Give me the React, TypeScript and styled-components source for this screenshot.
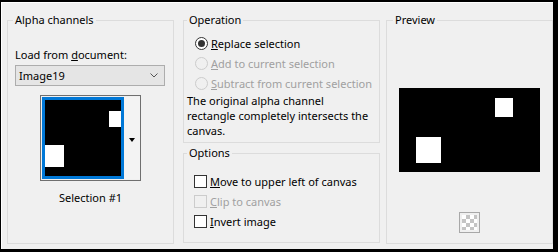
import styled, { createGlobalStyle } from 'styled-components';

const GlobalStyle = createGlobalStyle`
    html, body {
        margin: 0;
        padding: 0;
        background: #000;
    }
    body {
        width: 558px;
        height: 252px;
        overflow: hidden;
        font-family: "Noto Sans", "Segoe UI", sans-serif;
        font-size: 11px;
        color: #000;
    }
`

const Dialog = styled.div`
    box-sizing: border-box;
    margin: 2px 0 0 1px;
    width: 552px;
    height: 247px;
    background: #f0f0f0;
    border-top: 1px solid #fff;
    border-left: 1px solid #fff;
    padding: 9px 0 0 5px;
    display: flex;
    align-items: flex-start;
`
const Column = styled.div<{ $gap: number }>`
    display: flex;
    flex-direction: column;
    gap: 2px;
    margin-right: ${p => p.$gap}px;
`
const Group = styled.fieldset<{ $w: number; $h: number; $gap?: number }>`
    box-sizing: border-box;
    width: ${p => p.$w}px;
    height: ${p => p.$h}px;
    margin: 0 ${p => p.$gap ?? 0}px 0 0;
    padding: 0;
    min-width: 0;
    border: 1px solid #dcdcdc;
    display: flex;
    flex-direction: column;
`
const Legend = styled.legend<{ $indent: number }>`
    margin-left: ${p => p.$indent}px;
    padding: 0 2px;
    line-height: 16px;
`
const Key = styled.u`
    text-underline-offset: 1px;
`

/* alpha channels */
const AlphaBody = styled.div`
    display: flex;
    flex-direction: column;
    padding: 19px 7px 0;
`
const FieldLabel = styled.div`
    line-height: 16px;
`
const Combo = styled.div`
    box-sizing: border-box;
    margin-top: 2px;
    width: 150px;
    height: 21px;
    border: 1px solid #adadad;
    background: #e5e5e5;
    display: flex;
    align-items: center;
    justify-content: space-between;
    padding: 0 6px 0 3px;
`
const Thumb = styled.div`
    box-sizing: border-box;
    align-self: center;
    margin-top: 9px;
    width: 101px;
    height: 86px;
    border: 1px solid #6f6f6f;
    padding: 1px 0 1px 1px;
    display: flex;
    background: #f0f0f0;
`
const ThumbImage = styled.div`
    box-sizing: border-box;
    width: 82px;
    height: 82px;
    border: 3px solid #0078d7;
    background: #000;
    display: flex;
    svg { display: block; }
`
const ThumbArrow = styled.div`
    flex: 1;
    display: flex;
    align-items: center;
    justify-content: center;
    background: #f3f3f3;
    &::after {
        content: '';
        border-left: 3.5px solid transparent;
        border-right: 3.5px solid transparent;
        border-top: 4px solid #000;
        margin-top: 3px;
    }
`
const Caption = styled.div`
    margin-top: 9px;
    text-align: center;
    line-height: 16px;
`

/* operation + options */
const OptionList = styled.div<{ $top: number; $pad: number }>`
    display: flex;
    flex-direction: column;
    padding: ${p => p.$top}px 0 0 ${p => p.$pad}px;
`
const OptionRow = styled.label<{ $disabled?: boolean }>`
    height: 20px;
    display: flex;
    align-items: center;
    gap: 3px;
    color: ${p => (p.$disabled ? '#a0a0a0' : '#000')};
`
const Radio = styled.span<{ $on?: boolean; $disabled?: boolean }>`
    box-sizing: border-box;
    width: 13px;
    height: 13px;
    border-radius: 50%;
    border: 1px solid ${p => (p.$disabled ? '#cccccc' : '#333')};
    background: ${p => (p.$disabled ? '#f0f0f0' : '#fff')};
    display: flex;
    align-items: center;
    justify-content: center;
    &::after {
        content: '';
        width: 7px;
        height: 7px;
        border-radius: 50%;
        background: ${p => (p.$on ? '#333' : 'transparent')};
    }
`
const Check = styled.span<{ $disabled?: boolean }>`
    box-sizing: border-box;
    width: 13px;
    height: 13px;
    border: 1px solid ${p => (p.$disabled ? '#cccccc' : '#333')};
    background: ${p => (p.$disabled ? '#f0f0f0' : '#fff')};
`
const Note = styled.p`
    margin: 0;
    padding-left: 3px;
    line-height: 15px;
`

/* preview */
const PreviewBody = styled.div`
    display: flex;
    flex-direction: column;
    align-items: center;
    padding-top: 60px;
    svg { display: block; }
`
const Checker = styled.div`
    box-sizing: border-box;
    margin-top: 40px;
    width: 21px;
    height: 21px;
    border: 1px solid #a8a8a8;
    padding: 2px;
    background: #f0f0f0;
    &::after {
        content: '';
        display: block;
        width: 100%;
        height: 100%;
        background: repeating-conic-gradient(#c4c4c4 0 25%, #ffffff 0 50%) 0 0 / 8px 8px;
    }
`

export default function App() {
    return (
        <>
            <GlobalStyle />
            <Dialog>
                <Group $w={167} $h={232} $gap={9}>
                    <Legend $indent={5}>Alpha channels</Legend>
                    <AlphaBody>
                        <FieldLabel>Load from <Key>d</Key>ocument:</FieldLabel>
                        <Combo>
                            <span>Image19</span>
                            <svg width="8" height="5" viewBox="0 0 8 5">
                                <path d="M0.5 0.5 L4 4 L7.5 0.5" fill="none" stroke="#555" strokeWidth="1" />
                            </svg>
                        </Combo>
                        <Thumb>
                            <ThumbImage>
                                <svg width="76" height="76" viewBox="0 0 76 76">
                                    <rect x="0" y="0" width="76" height="76" fill="#000" />
                                    <rect x="64" y="11" width="12" height="16" fill="#fff" />
                                    <rect x="0" y="45" width="19" height="22" fill="#fff" />
                                </svg>
                            </ThumbImage>
                            <ThumbArrow />
                        </Thumb>
                        <Caption>Selection #1</Caption>
                    </AlphaBody>
                </Group>

                <Column $gap={6}>
                    <Group $w={197} $h={131}>
                        <Legend $indent={3}>Operation</Legend>
                        <OptionList $top={5} $pad={11}>
                            <OptionRow><Radio $on /><span><Key>R</Key>eplace selection</span></OptionRow>
                            <OptionRow $disabled><Radio $disabled /><span><Key>A</Key>dd to current selection</span></OptionRow>
                            <OptionRow $disabled><Radio $disabled /><span><Key>S</Key>ubtract from current selection</span></OptionRow>
                        </OptionList>
                        <Note>
                            The original alpha channel<br />
                            rectangle completely intersects the<br />
                            canvas.
                        </Note>
                    </Group>
                    <Group $w={197} $h={98}>
                        <Legend $indent={3}>Options</Legend>
                        <OptionList $top={10} $pad={10}>
                            <OptionRow><Check /><span><Key>M</Key>ove to upper left of canvas</span></OptionRow>
                            <OptionRow $disabled><Check $disabled /><span><Key>C</Key>lip to canvas</span></OptionRow>
                            <OptionRow><Check /><span><Key>I</Key>nvert image</span></OptionRow>
                        </OptionList>
                    </Group>
                </Column>

                <Group $w={167} $h={232}>
                    <Legend $indent={6}>Preview</Legend>
                    <PreviewBody>
                        <svg width="141" height="84" viewBox="0 0 141 84">
                            <rect x="0" y="0" width="141" height="84" fill="#000" />
                            <rect x="96" y="10" width="18" height="19" fill="#fff" />
                            <rect x="17" y="49" width="25" height="26" fill="#fff" />
                        </svg>
                        <Checker />
                    </PreviewBody>
                </Group>
            </Dialog>
        </>
    );
}
